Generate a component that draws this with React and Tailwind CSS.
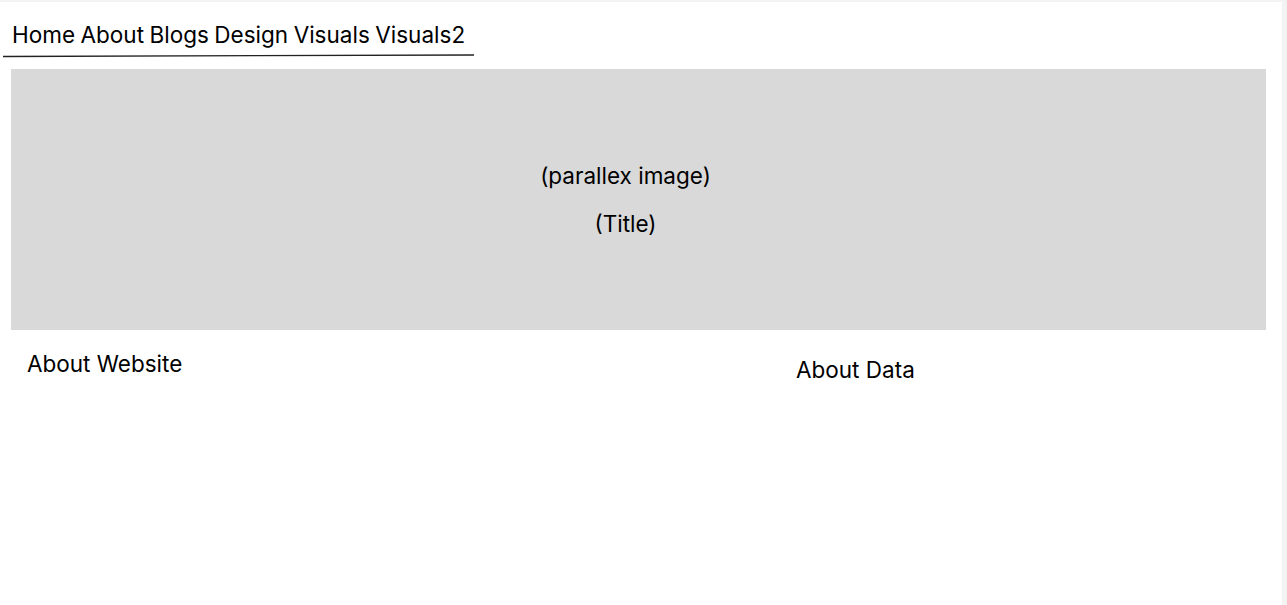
const nav = ['Home', 'About', 'Blogs', 'Design', 'Visuals', 'Visuals2']

export default function App() {
  return (
    <div className="h-[605px] bg-[#f3f3f3] pt-[2px] pr-[5px] font-['Inter',sans-serif] text-black">
      <div className="h-full bg-white">
        <header className="pl-[3px] pt-[20px]">
          <nav className="flex gap-[5.5px] pl-[9px] text-[22.5px] leading-[26px]">
            {nav.map((n) => (
              <span key={n}>{n}</span>
            ))}
          </nav>
          <svg width="472" height="4" className="mt-[6px] block">
            <line x1="0" y1="2.5" x2="471" y2="1" stroke="#222" strokeWidth="1.3" />
          </svg>
        </header>
        <section className="ml-[11px] mt-[11px] mr-[16px] h-[261px] pr-[26px] bg-[#d9d9d9] flex flex-col items-center justify-center gap-[22px] text-[22.5px] leading-[26px]">
          <p>(parallex image)</p>
          <p>(Title)</p>
        </section>
        <div className="flex pt-[21px] text-[22.5px] leading-[26px]">
          <div className="w-[796px] pl-[27px]">About Website</div>
          <div className="pt-[6px]">About Data</div>
        </div>
      </div>
    </div>
  )
}
